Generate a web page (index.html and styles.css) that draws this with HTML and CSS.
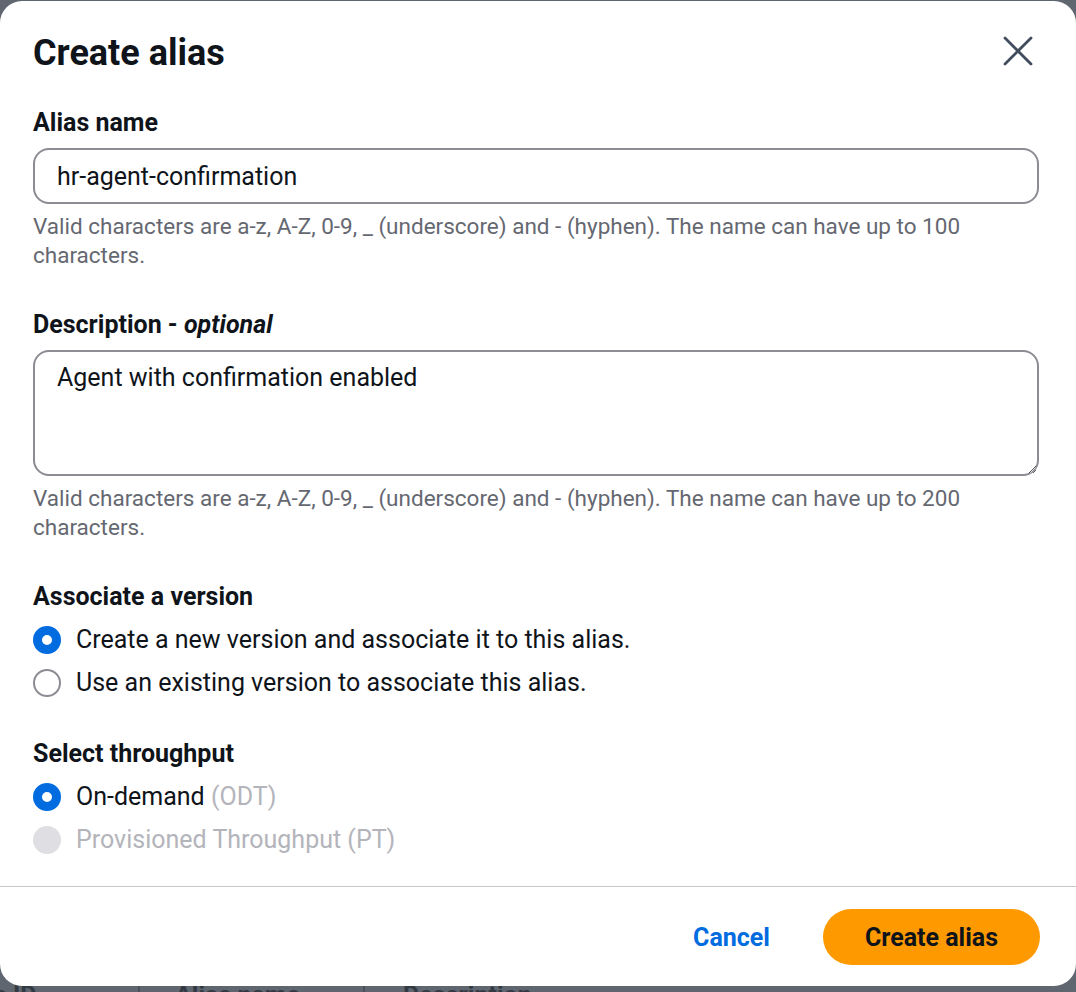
FILE: index.html
```html
<!DOCTYPE html>
<html lang="en">
<head>
<meta charset="utf-8">
<title>Create alias</title>
<link rel="stylesheet" href="styles.css">
</head>
<body>
<div class="modal">
  <div class="modal-header">
    <h2 class="modal-title">Create alias</h2>
    <button class="close-btn" aria-label="Close">
      <svg width="32" height="32" viewBox="0 0 32 32"><path d="M3 3 L29 29 M29 3 L3 29" stroke="#414d5c" stroke-width="2.8" stroke-linecap="round" fill="none"/></svg>
    </button>
  </div>
  <div class="modal-body">
    <div class="field">
      <label class="field-label">Alias name</label>
      <input class="text-input" type="text" value="hr-agent-confirmation">
      <div class="help">Valid characters are a-z, A-Z, 0-9, _ (underscore) and - (hyphen). The name can have up to 100 characters.</div>
    </div>
    <div class="field">
      <label class="field-label">Description - <i>optional</i></label>
      <textarea class="text-area">Agent with confirmation enabled</textarea>
      <div class="help">Valid characters are a-z, A-Z, 0-9, _ (underscore) and - (hyphen). The name can have up to 200 characters.</div>
    </div>
    <div class="field">
      <div class="field-label">Associate a version</div>
      <div class="radio-group">
        <div class="radio-row"><span class="radio checked"></span><span class="radio-text">Create a new version and associate it to this alias.</span></div>
        <div class="radio-row"><span class="radio"></span><span class="radio-text">Use an existing version to associate this alias.</span></div>
      </div>
    </div>
    <div class="field">
      <div class="field-label">Select throughput</div>
      <div class="radio-group">
        <div class="radio-row"><span class="radio checked"></span><span class="radio-text">On-demand <span class="muted">(ODT)</span></span></div>
        <div class="radio-row disabled"><span class="radio"></span><span class="radio-text">Provisioned Throughput (PT)</span></div>
      </div>
    </div>
  </div>
  <div class="modal-footer">
    <button class="btn-link">Cancel</button>
    <button class="btn-primary">Create alias</button>
  </div>
</div>
<div class="page-behind">
  <span class="col c1">s ID</span><span class="caret">▾</span><span class="sep"></span>
  <span class="col c2">Alias name</span><span class="sep s2"></span>
  <span class="col c3">Description</span><span class="caret c3c">▾</span>
</div>
</body>
</html>
```

FILE: styles.css
```css
* { box-sizing: border-box; }

html, body {
  margin: 0;
  padding: 0;
  background: #5f6670;
  font-family: Roboto, "Liberation Sans", Arial, sans-serif;
  color: #0f141a;
  height: 992px;
  overflow: hidden;
}

.modal {
  position: relative;
  z-index: 1;
  margin-top: 1px;
  background: #ffffff;
  border-radius: 22px;
  height: 985px;
  display: flex;
  flex-direction: column;
}

.modal-header {
  display: flex;
  align-items: center;
  justify-content: space-between;
  padding: 30px 42px 0 33px;
}

.modal-title {
  margin: 0;
  font-size: 36px;
  line-height: 44px;
  font-weight: 700;
}

.close-btn {
  border: 0;
  background: none;
  padding: 0;
  width: 32px;
  height: 32px;
  display: flex;
  margin-top: -4px;
}

.modal-body {
  padding: 34px 37px 0 33px;
  flex: 1;
}

.field { margin-bottom: 41px; }
.field:last-child { margin-bottom: 0; }

.field-label {
  display: block;
  font-size: 25px;
  line-height: 28px;
  font-weight: 700;
  margin-bottom: 11px;
}
.field-label i { font-weight: 700; }

.text-input,
.text-area {
  display: block;
  width: 100%;
  border: 2px solid #8c8c94;
  border-radius: 16px;
  font-family: inherit;
  font-size: 25px;
  color: #0f141a;
  background: #fff;
  outline: none;
}

.text-input {
  height: 56px;
  padding: 0 22px;
}

.text-area {
  height: 126px;
  padding: 12px 22px;
  line-height: 28px;
  resize: vertical;
}

.help {
  margin-top: 8px;
  font-size: 22.5px;
  line-height: 29px;
  color: #656871;
}

.radio-group {
  display: flex;
  flex-direction: column;
  margin-top: -4px;
  margin-bottom: -5px;
}

.radio-row {
  display: flex;
  align-items: center;
  gap: 15px;
  height: 43px;
}

.radio {
  width: 28px;
  height: 28px;
  border-radius: 50%;
  border: 2px solid #8c8c94;
  flex: none;
}

.radio.checked {
  border: 9px solid #006ce0;
  background: #fff;
}

.radio-text {
  font-size: 25px;
  line-height: 28px;
}

.muted { color: #b4b4bb; }

.disabled .radio {
  border: none;
  background: #dedee3;
}
.disabled .radio-text { color: #b4b4bb; }

.modal-footer {
  border-top: 1px solid #c6c6cd;
  display: flex;
  justify-content: flex-end;
  align-items: center;
  gap: 27px;
  padding: 22px 36px 21px 0;
}

.btn-link {
  border: 0;
  background: none;
  color: #006ce0;
  font-family: inherit;
  font-size: 25px;
  font-weight: 700;
  padding: 0 26px;
  height: 56px;
}

.btn-primary {
  border: 0;
  background: #ff9900;
  color: #0f141a;
  font-family: inherit;
  font-size: 25px;
  font-weight: 700;
  height: 56px;
  width: 217px;
  border-radius: 28px;
}

.page-behind {
  display: flex;
  align-items: flex-start;
  height: 30px;
  color: #343a43;
  font-size: 25px;
  font-weight: 700;
  line-height: 28px;
  margin-top: -4px;
}

.col.c1 { margin-left: -6px; width: 108px; }
.caret { width: 36px; font-size: 18px; }
.sep { width: 2px; height: 28px; background: #4c525b; margin-right: 35px; }
.col.c2 { width: 188px; }
.sep.s2 { margin-right: 38px; }
.col.c3 { width: 158px; }
```
